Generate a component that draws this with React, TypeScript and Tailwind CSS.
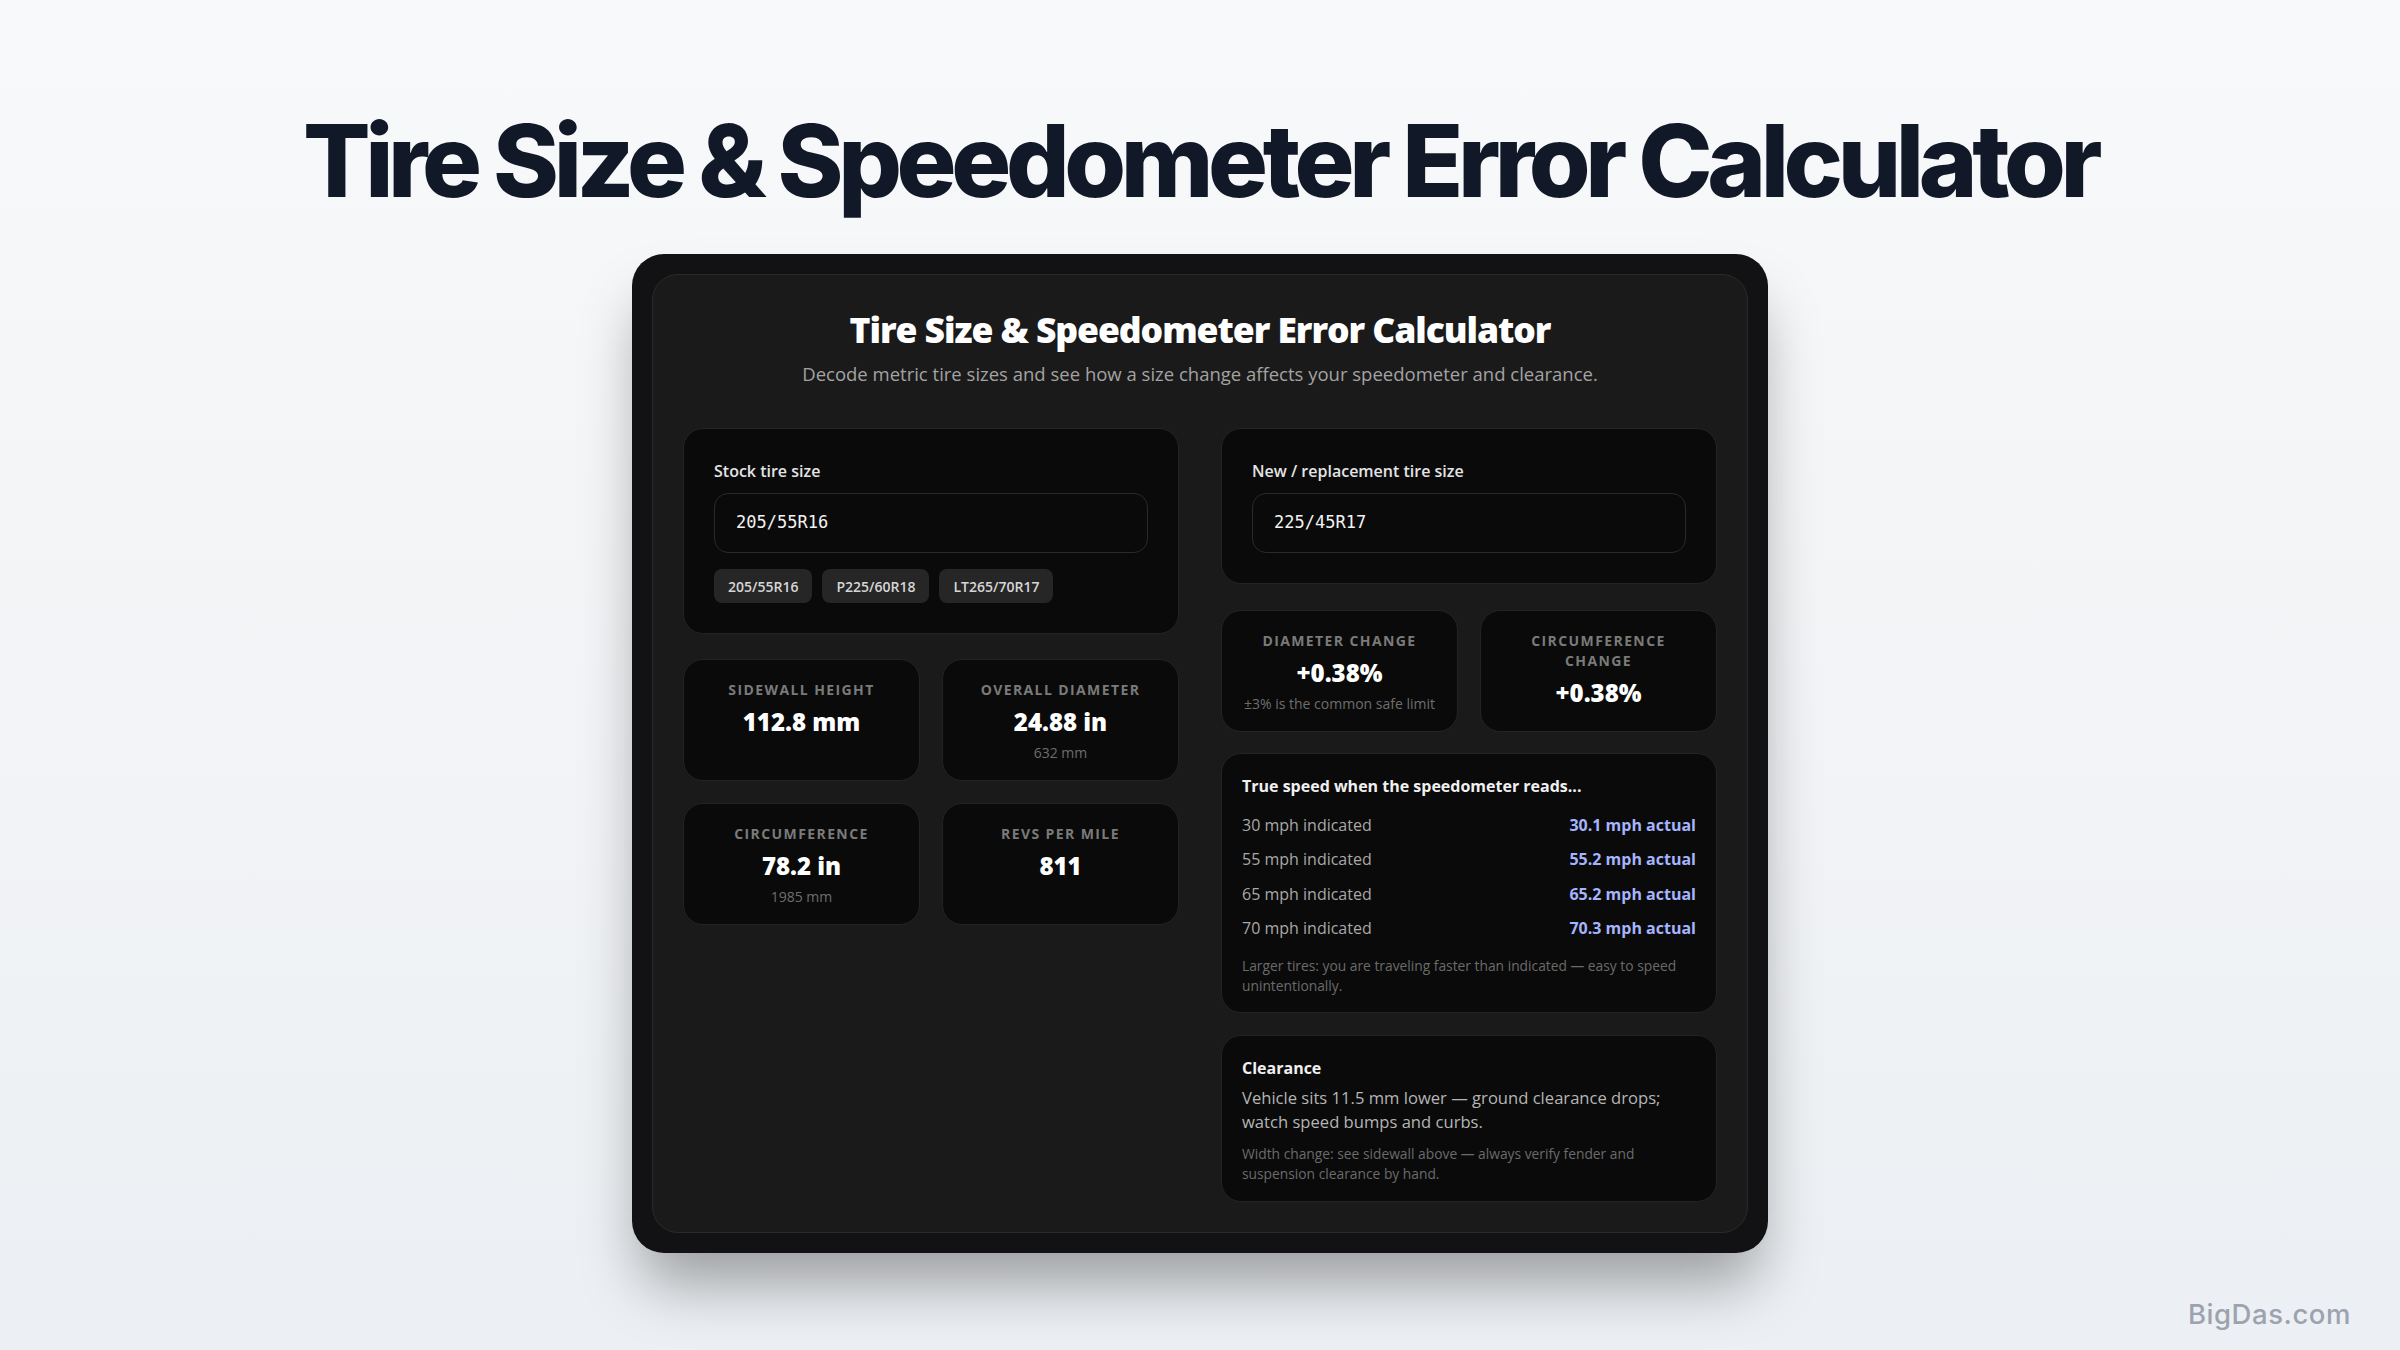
import React from 'react';

const body = { fontFamily: '"Open Sans", "Noto Sans", sans-serif' };
const mono = { fontFamily: '"DejaVu Sans Mono", "Liberation Mono", monospace' };

function TireInput({ label, value, chips }: { label: string; value: string; chips?: string[] }) {
  return (
    <div className="rounded-[20px] border border-[#242424] bg-[#0a0a0a] p-[30px]">
      <div className="text-[16px] leading-[24px] font-semibold text-[#e4e4e4]">{label}</div>
      <div className="mt-[10px] h-[60px] rounded-[14px] border border-[#2a2a2a] bg-[#0a0a0a] px-[21px] flex items-center">
        <span className="text-[17px] text-[#f2f2f2]" style={mono}>{value}</span>
      </div>
      {chips && (
        <div className="mt-[16px] flex gap-[10px]">
          {chips.map(c => (
            <span key={c} className="h-[34px] px-[14px] rounded-[8px] bg-[#262626] text-[#d6d6d6] text-[14px] font-semibold flex items-center">
              {c}
            </span>
          ))}
        </div>
      )}
    </div>
  );
}

function Stat({ label, value, sub }: { label: string; value: string; sub?: string }) {
  return (
    <div className="rounded-[20px] border border-[#242424] bg-[#0a0a0a] pt-[20px] pb-[17px] px-[20px] text-center">
      <div className="text-[14px] leading-[20px] font-bold tracking-[0.1em] text-[#7a7a7a] uppercase">{label}</div>
      <div className="mt-[6px] text-[24px] leading-[32px] font-black text-white" style={{ fontFamily: '"Noto Sans", "Open Sans", sans-serif' }}>{value}</div>
      {sub && <div className="mt-[5px] text-[14px] leading-[20px] text-[#6e6e6e]">{sub}</div>}
    </div>
  );
}

const speeds = [
  ['30 mph indicated', '30.1 mph actual'],
  ['55 mph indicated', '55.2 mph actual'],
  ['65 mph indicated', '65.2 mph actual'],
  ['70 mph indicated', '70.3 mph actual'],
];

export default function App() {
  return (
    <div className="relative h-[1350px] w-full overflow-hidden bg-gradient-to-b from-[#f8f9fa] to-[#eceff3] flex flex-col items-center">
      <h1
        className="pt-[111px] text-[100px] leading-none font-extrabold tracking-[-0.054em] text-[#111827]"
        style={{ fontFamily: 'Inter, "Noto Sans", sans-serif' }}
      >
        Tire Size &amp; Speedometer Error Calculator
      </h1>

      <div className="mt-[43px] w-[1136px] rounded-[32px] bg-[#121214] p-[20px] shadow-[0_40px_60px_-10px_rgba(0,0,0,0.35)]">
        <div className="rounded-[26px] border border-[#2a2a2a] bg-[#1a1a1a] px-[30px] pt-[34px] pb-[30px]" style={body}>
          <h2 className="text-center text-[35.5px] leading-[40px] font-extrabold tracking-[-0.03em] text-white">
            Tire Size &amp; Speedometer Error Calculator
          </h2>
          <p className="mt-[12px] text-center text-[18.5px] leading-[26px] text-[#a3a3a3]">
            Decode metric tire sizes and see how a size change affects your speedometer and clearance.
          </p>

          <div className="mt-[41px] grid grid-cols-2 gap-x-[42px] items-start">
            <div className="flex flex-col">
              <TireInput label="Stock tire size" value="205/55R16" chips={['205/55R16', 'P225/60R18', 'LT265/70R17']} />
              <div className="mt-[25px] grid grid-cols-2 gap-[22px]">
                <Stat label="Sidewall height" value="112.8 mm" />
                <Stat label="Overall diameter" value="24.88 in" sub="632 mm" />
                <Stat label="Circumference" value="78.2 in" sub="1985 mm" />
                <Stat label="Revs per mile" value="811" />
              </div>
            </div>

            <div className="flex flex-col">
              <TireInput label="New / replacement tire size" value="225/45R17" />
              <div className="mt-[26px] grid grid-cols-2 gap-[22px]">
                <Stat label="Diameter change" value="+0.38%" sub="±3% is the common safe limit" />
                <Stat label="Circumference change" value="+0.38%" />
              </div>

              <div className="mt-[21px] rounded-[20px] border border-[#242424] bg-[#0a0a0a] px-[20px] pt-[20px] pb-[16px]">
                <div className="text-[16px] leading-[24px] font-bold text-[#f0f0f0]">True speed when the speedometer reads...</div>
                <div className="mt-[15px] flex flex-col gap-[10.3px]">
                  {speeds.map(([a, b]) => (
                    <div key={a} className="flex justify-between text-[16px] leading-[24px]">
                      <span className="text-[#a8a8a8]">{a}</span>
                      <span className="font-bold text-[#a5b4fc]">{b}</span>
                    </div>
                  ))}
                </div>
                <p className="mt-[16px] text-[13.8px] leading-[20px] text-[#6b6b6b]">
                  Larger tires: you are traveling faster than indicated — easy to speed unintentionally.
                </p>
              </div>

              <div className="mt-[22px] rounded-[20px] border border-[#242424] bg-[#0a0a0a] px-[20px] pt-[20px] pb-[17px]">
                <div className="text-[16px] leading-[24px] font-bold text-[#f0f0f0]">Clearance</div>
                <p className="mt-[6px] text-[16.6px] leading-[24px] text-[#b5b5b5]">
                  Vehicle sits 11.5 mm lower — ground clearance drops; watch speed bumps and curbs.
                </p>
                <p className="mt-[10px] text-[13.8px] leading-[20px] text-[#6b6b6b]">
                  Width change: see sidewall above — always verify fender and suspension clearance by hand.
                </p>
              </div>
            </div>
          </div>
        </div>
      </div>

      <div
        className="absolute right-[49px] bottom-[15px] text-[27.5px] font-medium tracking-[0.02em] text-[#9ca3af]"
        style={{ fontFamily: 'Inter, "Noto Sans", sans-serif' }}
      >
        BigDas.com
      </div>
    </div>
  );
}
